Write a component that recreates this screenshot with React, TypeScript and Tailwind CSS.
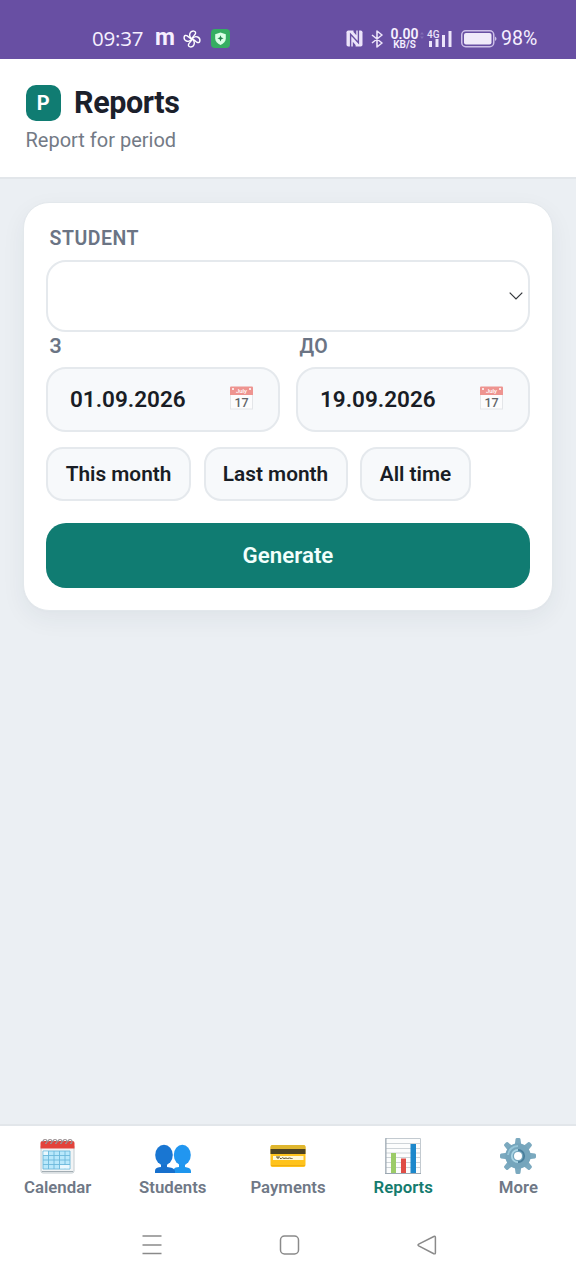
import type { ReactNode } from "react";

function NfcIcon() {
  return (
    <svg width="17" height="17" viewBox="0 0 17 17">
      <rect x=".5" y=".5" width="16" height="16" rx="1.800" fill="#ece4fa" />
      <path d="M4.600 17V4.300L12.400 12.700V0" fill="none" stroke="#684fa3" strokeWidth="1.400" />
      <path d="M7.500 0v2l2.800 3.200V0ZM6.800 17v-5.200l2.800 3.200V17Z" fill="#684fa3" />
    </svg>
  );
}

function BluetoothIcon() {
  return (
    <svg width="13" height="18" viewBox="0 0 13 18" fill="none" stroke="#ece4fa" strokeWidth="1.600">
      <path d="M1 5l10 8-5 4V1l5 4-10 8" strokeLinejoin="round" />
    </svg>
  );
}

function PinwheelIcon() {
  const petal = "M9 9C6.800 7.500 6.300 5.300 7 3.300 7.600 1.700 9 .9 10.800 1.100 12.600 1.300 13 2.900 12.200 4.200 11.300 5.700 9.600 6.500 9 9Z";
  return (
    <svg width="18" height="18" viewBox="0 0 18 18" fill="none" stroke="#fff" strokeWidth="1.400" strokeLinejoin="round">
      {[0, 90, 180, 270].map((angle) => (
        <path key={angle} d={petal} transform={`rotate(${angle} 9 9)`} />
      ))}
    </svg>
  );
}

function ShieldIcon() {
  return (
    <svg width="19" height="19" viewBox="0 0 19 19">
      <rect width="19" height="19" rx="4" fill="#35ae62" />
      <path d="M9.500 3.600 14.800 5.200v4.300c0 3-2.100 5.100-5.300 6.400-3.200-1.300-5.300-3.400-5.300-6.400V5.200Z" fill="#d9ffe5" />
      <path d="M9.500 6.200l.9 2.200 2.200.9-2.200.9-.9 2.200-.9-2.200-2.200-.9 2.200-.9Z" fill="#23804d" />
    </svg>
  );
}

function SignalIcon() {
  return (
    <svg className="overflow-visible" width="33" height="19" viewBox="0 0 33 19" fill="#ece4fa">
      <path d="M0 5.500 2 3l2 2.500ZM0 7.500 2 10l2-2.500Z" opacity=".2" />
      <text x="7" y="8.700" fontFamily="Roboto, sans-serif" fontSize="11.500" fontWeight="500" textLength="12.500" lengthAdjust="spacingAndGlyphs">
        4G
      </text>
      <rect x="9" y="12" width="3" height="6" />
      <rect x="15.500" y="10" width="3" height="8" />
      <rect x="22" y="6" width="3" height="12" />
      <rect x="28.500" y="2" width="3" height="16" />
    </svg>
  );
}

function BatteryIcon() {
  return (
    <svg width="36" height="18" viewBox="0 0 36 18">
      <rect x=".75" y=".75" width="32" height="16" rx="4" fill="none" stroke="#cdbfe8" strokeWidth="1.500" />
      <rect x="3" y="3" width="27.500" height="11.500" rx="2" fill="#f0eafa" />
      <path d="M34 6.500q1.500.7 1.500 2.300T34 11Z" fill="#cdbfe8" />
    </svg>
  );
}

function StatusBar() {
  return (
    <div className="flex h-[59px] shrink-0 items-center bg-[#684fa3] pl-[92px] pt-[18px] text-[#f6f0ff]">
      <div className="flex w-[254px] items-center">
        <span className="w-[63px] pb-[2px] text-[20.5px] leading-5 tracking-[-0.2px] font-medium font-['Open_Sans',sans-serif]">
          09:37
        </span>
        <span className="w-[28px] pb-px text-[23px] leading-5 font-bold">m</span>
        <span className="w-[28px]">
          <PinwheelIcon />
        </span>
        <ShieldIcon />
      </div>
      <div className="flex items-center">
        <span className="w-[25px]">
          <NfcIcon />
        </span>
        <span className="w-[18px]">
          <BluetoothIcon />
        </span>
        <span className="flex w-[31px] flex-col items-center pt-px whitespace-nowrap font-semibold">
          <span className="text-[14px] leading-[11px]">0.00</span>
          <span className="text-[10px] leading-[10px]">KB/S</span>
        </span>
        <SignalIcon />
        <span className="ml-[8px]">
          <BatteryIcon />
        </span>
        <span className="ml-[4px] text-[19.5px] leading-5">98%</span>
      </div>
    </div>
  );
}

function JulyCalendarIcon() {
  return (
    <svg className="mb-[3px]" width="24" height="24" viewBox="0 0 24 24">
      <rect x=".5" y="1.500" width="22" height="21.500" fill="#fcfcfd" stroke="#e4e6e9" />
      <path d="M0 1.500Q0 .5 1 .5h21q1 0 1 1V9H0Z" fill="#ee9490" />
      <circle cx="3" cy="3" r="1" fill="#fff" />
      <circle cx="20" cy="3" r="1" fill="#fff" />
      <text x="11.500" y="7.200" fill="#fff" fontSize="6" fontWeight="500" textAnchor="middle">
        July
      </text>
      <text x="11.500" y="20.500" fill="#626468" fontSize="12.500" fontWeight="500" textAnchor="middle">
        17
      </text>
    </svg>
  );
}

function CalendarIcon() {
  const rings = [4, 9, 14, 19, 24, 29];
  return (
    <svg width="36" height="36" viewBox="0 0 36 36">
      <path d="M1 8h33v25q0 2-2 2H3q-2 0-2-2Z" fill="#f2f4f5" stroke="#c4ccd0" />
      <path d="M2 33.500h31" stroke="#a3adb3" />
      <path d="M.5 5q0-2 2-2h30q2 0 2 2v5.500H.5Z" fill="#e3433b" />
      <rect x="3" y="13" width="27" height="18" fill="#b9e8fb" />
      <path
        d="M3 17.500h27M3 22h27M3 26.500h27M8.500 13v18M14 13v18M19.500 13v18M25 13v18M3 13h27v18H3Z"
        stroke="#6cb8da"
        strokeWidth=".9"
        fill="none"
      />
      <path d="M3.500 13.500h4.500V17H3.500ZM20 27h9.500v3.500H20Z" fill="#eaf8fe" />
      {rings.map((x) => (
        <path key={x} d={`M${x - 1} 4q0-2.500 2-2.500t2 2-2 2`} fill="none" stroke="#9b9193" strokeWidth="1.200" />
      ))}
    </svg>
  );
}

function StudentsIcon() {
  return (
    <svg width="36" height="36" viewBox="0 0 36 36">
      <path d="M18.500 35v-2q0-3.500 4-3.700l1.500-.3v-3h6v3l2 .4q4 .6 4 4.100v1.500Z" fill="#1e96ee" />
      <ellipse cx="27.300" cy="17" rx="8.500" ry="10.300" fill="#2196f0" />
      <path d="M0 35v-2q0-3.200 4-3.700l2-.3v-3h6v3l3 .4q5 .7 5 4.100v1.500Z" fill="#1770cd" />
      <ellipse cx="9" cy="17" rx="8.800" ry="10.300" fill="#1976d2" />
    </svg>
  );
}

function PaymentsIcon() {
  return (
    <svg width="36" height="36" viewBox="0 0 36 36">
      <rect x=".5" y="7" width="35" height="22" rx="2" fill="#ffc31c" />
      <path d="M.5 11V9q0-2 2-2h31q2 0 2 2v2Z" fill="#dfb62e" />
      <path d="M.5 11h35v5H.5Z" fill="#4e4322" />
      <path d="M3 18h30.500v4H3Z" fill="#fff8d5" />
      <path d="M6 19h4M8 19v2M10 20.500h1.500l1-.8 1.500.8 2-.5 1.500.5 2-.5 2 .5h1" fill="none" stroke="#5c5133" />
      <path d="M1 27.500h34" stroke="#efae13" />
    </svg>
  );
}

function ReportsIcon() {
  return (
    <svg width="36" height="36" viewBox="0 0 36 36">
      <path d="M.5.500h35v35H.5Z" fill="#fcfdfd" stroke="#c3cad0" />
      <path d="M1 5.500h34M1 10.500h34M1 15h34M1 19.500h34M1 24.500h34M1 29.500h34" stroke="#ced4d8" />
      <path d="M1 0v36M0 35.500h36" stroke="#9ca8b2" />
      <rect x="6" y="15" width="5" height="20" fill="#9bcb67" />
      <rect x="16" y="20.500" width="5" height="14.500" fill="#df4d46" />
      <rect x="25.500" y="6" width="5.500" height="29" fill="#1b87cb" />
    </svg>
  );
}

function GearIcon() {
  return (
    <svg width="36" height="36" viewBox="0 0 36 36">
      {[0, 45, 90, 135, 180, 225, 270, 315].map((angle) => (
        <path
          key={angle}
          d="M14.500 9 15.500 1.200Q15.600 0 17 0h2q1.400 0 1.500 1.200L21.500 9Z"
          fill="#7ba9bf"
          transform={`rotate(${angle} 18 18)`}
        />
      ))}
      <path
        fillRule="evenodd"
        fill="#75a5bc"
        d="M18 5.300a12.700 12.700 0 1 1 0 25.400 12.700 12.700 0 0 1 0-25.400ZM18 14a4 4 0 1 0 0 8 4 4 0 0 0 0-8Z"
      />
      <path d="M8 17A10 10 0 0 1 18 8" fill="none" stroke="#94c4d7" strokeWidth="2" />
      <path d="M18 11.800a6.200 6.200 0 0 1 0 12.400" fill="none" stroke="#497f9c" strokeWidth="1.800" />
      <path d="M18 24.200a6.200 6.200 0 0 1 0-12.400" fill="none" stroke="#a9d4e4" strokeWidth="1.800" />
    </svg>
  );
}

function FieldLabel({ children }: { children: ReactNode }) {
  return (
    <div className="h-6 pt-px pl-[3.5px] text-[19.5px] leading-6 font-semibold tracking-[0.5px] text-[#6b7484]">
      {children}
    </div>
  );
}

function DateField({ label, value }: { label: string; value: string }) {
  return (
    <div className="flex-1">
      <FieldLabel>{label}</FieldLabel>
      <div className="mt-[9px] flex h-[65px] items-center justify-between rounded-[20px] border-2 border-[#e5e9ed] bg-[#f7f9fb] pr-[24px] pl-[22px]">
        <span className="text-[22.5px] font-semibold text-[#191d25]">{value}</span>
        <JulyCalendarIcon />
      </div>
    </div>
  );
}

const presets = [
  { label: "This month", width: "w-[145px]" },
  { label: "Last month", width: "w-[144px]" },
  { label: "All time", width: "w-[111px]" },
];

const tabs = [
  { label: "Calendar", icon: <CalendarIcon /> },
  { label: "Students", icon: <StudentsIcon /> },
  { label: "Payments", icon: <PaymentsIcon /> },
  { label: "Reports", icon: <ReportsIcon />, active: true },
  { label: "More", icon: <GearIcon /> },
];

function ReportForm() {
  return (
    <section className="h-[409px] rounded-[26px] border border-[#e3e8ec] bg-white px-[22px] pt-[23px] shadow-[0_1px_1px_#e0e5ea,0_8px_24px_rgba(30,45,75,0.06)]">
      <FieldLabel>STUDENT</FieldLabel>
      <div className="mt-[10px] flex h-[72px] items-center justify-end rounded-[20px] border-2 border-[#e5e9ed] bg-white pr-[5px]">
        <svg width="14" height="8" viewBox="0 0 14 8" fill="none" stroke="#33363b" strokeWidth="1.200">
          <path d="M.7.700 7 7l6.300-6.300" />
        </svg>
      </div>
      <div className="mt-[2px] flex gap-4">
        <DateField label="З" value="01.09.2026" />
        <DateField label="ДО" value="19.09.2026" />
      </div>
      <div className="mt-[15px] flex gap-[12.5px]">
        {presets.map((preset) => (
          <button
            key={preset.label}
            className={`h-[54px] shrink-0 rounded-[17px] border-2 border-[#e5e9ed] bg-[#f7f9fb] pt-[2px] text-[20.8px] font-semibold whitespace-nowrap text-[#191d25] ${preset.width}`}
          >
            {preset.label}
          </button>
        ))}
      </div>
      <button className="mt-[22px] h-[65px] w-full rounded-[20px] bg-[#107c72] pt-px text-[22.3px] font-semibold text-[#f2fffc]">
        Generate
      </button>
    </section>
  );
}

function TabBar() {
  return (
    <nav className="grid h-[84px] shrink-0 grid-cols-5 border-t-2 border-[#e2e6ea] bg-white pt-[12px]">
      {tabs.map((tab) => (
        <div key={tab.label} className="flex flex-col items-center">
          {tab.icon}
          <span
            className={`mt-[3px] text-[16.8px] leading-5 font-semibold ${tab.active ? "text-[#147b6e]" : "text-[#6f7886]"}`}
          >
            {tab.label}
          </span>
        </div>
      ))}
    </nav>
  );
}

function SystemBar() {
  return (
    <div className="flex h-[72px] shrink-0 justify-between bg-white pt-[24px] pr-[136px] pl-[138px]">
      <svg width="28" height="26" viewBox="0 0 28 26" fill="none" stroke="#8a8a8a" strokeWidth="1.600">
        <path d="M4.500 4h19M4.500 13h19M4.500 21.500h19" />
      </svg>
      <svg width="28" height="26" viewBox="0 0 28 26" fill="none" stroke="#8a8a8a" strokeWidth="1.500">
        <rect x="5.500" y="4" width="18" height="18" rx="4" />
      </svg>
      <svg width="28" height="26" viewBox="0 0 28 26" fill="none" stroke="#8a8a8a" strokeWidth="1.500">
        <path d="M6.700 12.200 21.800 4.500q1.600-.6 1.600 1v15.200q0 1.600-1.600 1L6.700 13.800q-1.400-.8 0-1.600Z" />
      </svg>
    </div>
  );
}

export default function App() {
  return (
    <div className="flex h-[1280px] w-[576px] flex-col overflow-hidden bg-[#ebeff3] font-[Roboto,sans-serif]">
      <StatusBar />
      <header className="h-[120px] shrink-0 border-b-2 border-[#e2e6ea] bg-white pt-[26px] pl-[25.5px]">
        <div className="flex items-center gap-[13px]">
          <div className="flex size-[35.5px] items-center justify-center rounded-[10px] bg-[#107c72] text-[20px] font-bold text-white">
            P
          </div>
          <h1 className="text-[30.5px] leading-9 font-bold tracking-[-0.4px] text-[#1b202b]">Reports</h1>
        </div>
        <p className="mt-[7px] text-[20px] leading-6 text-[#737a86]">Report for period</p>
      </header>
      <main className="flex-1 px-[23px] pt-[23px]">
        <ReportForm />
      </main>
      <TabBar />
      <SystemBar />
    </div>
  );
}
